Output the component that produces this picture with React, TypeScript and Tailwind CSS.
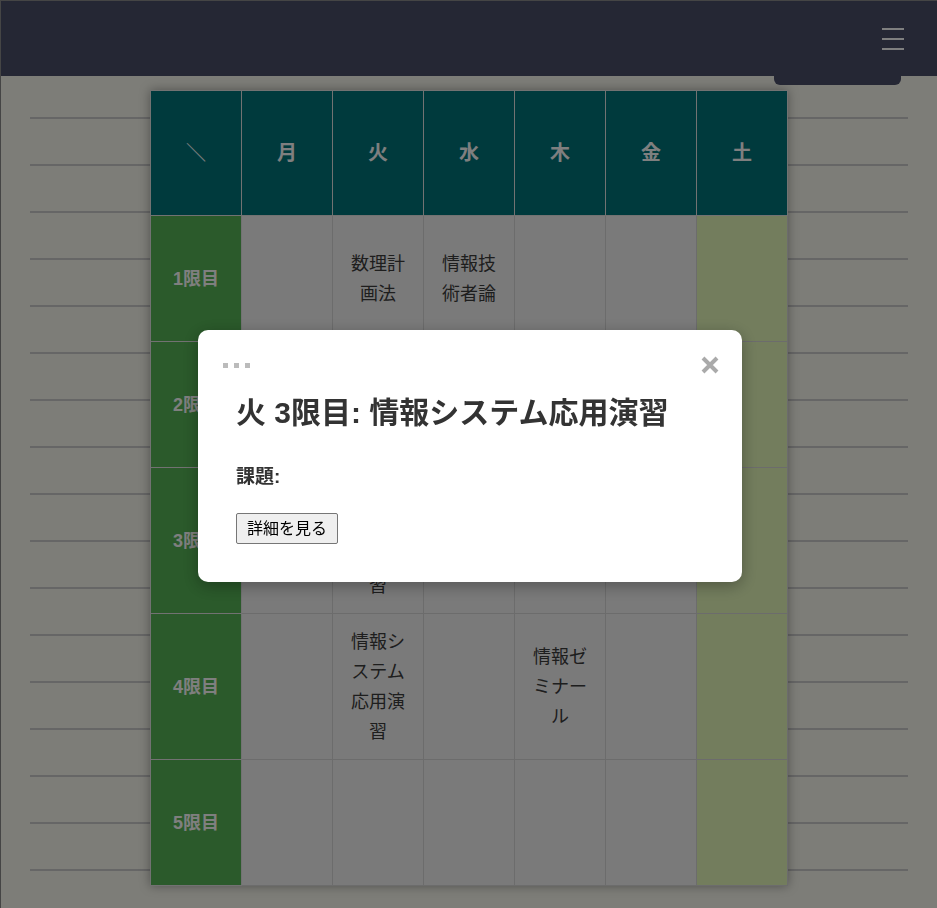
import React from "react";

const days = ["月", "火", "水", "木", "金", "土"];

// rows of the timetable: one entry per day (月..土)
const periods: { label: string; cells: string[]; tall?: boolean }[] = [
  { label: "1限目", cells: ["", "数理計画法", "情報技術者論", "", "", ""] },
  { label: "2限目", cells: ["", "", "", "", "", ""] },
  { label: "3限目", cells: ["", "情報システム応用演習", "", "", "", ""], tall: true },
  { label: "4限目", cells: ["", "情報システム応用演習", "", "情報ゼミナール", "", ""], tall: true },
  { label: "5限目", cells: ["", "", "", "", "", ""] },
];

const font = {
  fontFamily: '"Liberation Sans", "Noto Sans CJK JP", sans-serif',
};

function Header() {
  return (
    <header className="relative h-[75px] bg-[#4a4e68]">
      <button className="absolute right-[33px] top-[26px] flex w-[22px] flex-col gap-[8px] py-[1px]">
        <span className="block h-[2px] w-full bg-white" />
        <span className="block h-[2px] w-full bg-white" />
        <span className="block h-[2px] w-full bg-white" />
      </button>
      <div className="absolute right-[36px] top-[75px] h-[9px] w-[127px] rounded-b-md bg-[#4a4e68]" />
    </header>
  );
}

function Timetable() {
  return (
    <table className="w-[638px] table-fixed border-collapse shadow-[0_0_10px_rgba(0,0,0,0.35)]">
      <thead>
        <tr>
          <th className="h-[125px] border border-[#e4e4e4] bg-[#00747a] text-xl font-normal text-white">
            ＼
          </th>
          {days.map((d) => (
            <th
              key={d}
              className="h-[125px] border border-[#e4e4e4] bg-[#00747a] text-xl font-bold text-white"
            >
              {d}
            </th>
          ))}
        </tr>
      </thead>
      <tbody>
        {periods.map((p) => (
          <tr key={p.label}>
            <th
              className={`${p.tall ? "h-[146px]" : "h-[126px]"} border border-[#e4e4e4] bg-[#56b456] text-lg font-bold text-white`}
            >
              {p.label}
            </th>
            {p.cells.map((c, i) => (
              <td
                key={i}
                className={`border border-[#d8d8d8] px-[10px] py-[12px] text-center align-middle text-lg leading-[30px] text-[#3c3c3c] ${
                  i === 5 ? "bg-[#e6fabb]" : "bg-[#f4f4f4]"
                }`}
              >
                {c}
              </td>
            ))}
          </tr>
        ))}
      </tbody>
    </table>
  );
}

function Modal() {
  return (
    <div className="fixed inset-0 flex items-center justify-center bg-black/50 pl-[3px] pt-[4px]">
      <div className="relative w-[544px] rounded-[10px] bg-white px-[38px] pb-[38px] pt-[63px] shadow-[0_4px_16px_rgba(0,0,0,0.3)]">
        <div className="absolute left-[25px] top-[33px] flex gap-[6px]">
          <span className="h-[5px] w-[5px] bg-[#bbbbbb]" />
          <span className="h-[5px] w-[5px] bg-[#bbbbbb]" />
          <span className="h-[5px] w-[5px] bg-[#bbbbbb]" />
        </div>
        <button className="absolute right-[20px] top-[24px] h-[22px] w-[22px] text-[#aaaaaa]">
          <svg viewBox="0 0 20 20" className="h-[20px] w-[20px]">
            <path d="M3 3 L17 17 M17 3 L3 17" stroke="currentColor" strokeWidth="4" />
          </svg>
        </button>
        <h2 className="text-[30px] font-bold leading-[40px] text-[#333333]">
          火 3限目: 情報システム応用演習
        </h2>
        <p className="mt-[32px] text-[19px] font-bold leading-6 text-[#333333]">課題:</p>
        <button className="mt-6 h-[31px] rounded-[2px] border border-[#767676] bg-[#efefef] px-[10px] text-base text-black">
          詳細を見る
        </button>
      </div>
    </div>
  );
}

export default function App() {
  return (
    <div className="min-h-screen border-l border-t border-[#8a8a8a] bg-[#fafaf0]" style={font}>
      <Header />
      <main className="mx-[29px] flex justify-center bg-[repeating-linear-gradient(to_bottom,transparent_0px,transparent_41px,#cccccc_41px,#cccccc_43px,transparent_43px,transparent_47px)] pb-[23px] pt-[14px]">
        <Timetable />
      </main>
      <Modal />
    </div>
  );
}
